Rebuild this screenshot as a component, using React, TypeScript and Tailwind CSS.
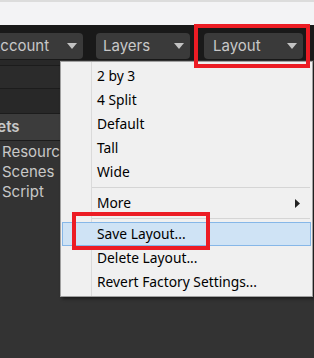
import React from "react";

interface IMenuItem {
  label: string;
  submenu?: boolean;
  active?: boolean;
  separatorBefore?: boolean;
}

const menuItems: Array<IMenuItem> = [
  { label: "2 by 3" },
  { label: "4 Split" },
  { label: "Default" },
  { label: "Tall" },
  { label: "Wide" },
  { label: "More", submenu: true, separatorBefore: true },
  { label: "Save Layout...", active: true, separatorBefore: true },
  { label: "Delete Layout..." },
  { label: "Revert Factory Settings..." },
];

function Caret() {
  return (
    <svg width="10" height="6" viewBox="0 0 10 6" className="shrink-0">
      <path d="M0 0 L10 0 L5 6 Z" fill="#c2c2c2" />
    </svg>
  );
}

function ToolButton(props: { label: string; className: string }) {
  return (
    <div
      className={`h-[26px] rounded-[4px] bg-[#3a3a3a] flex items-center justify-between text-[15px] text-[#c8c8c8] ${props.className}`}
    >
      <span>{props.label}</span>
      <Caret />
    </div>
  );
}

function App() {
  return (
    <div
      className="relative w-[314px] h-[358px] overflow-hidden bg-[#333333]"
      style={{ fontFamily: "Inter, 'Noto Sans', sans-serif" }}
    >
      {/* top window strip */}
      <div className="h-[25px] bg-[#f3f3f5] border-t-2 border-[#dcdcdc]" />

      {/* toolbar */}
      <div className="h-[35px] bg-[#191919] flex items-end pb-[1px]">
        <ToolButton label="Account" className="w-[93px] -ml-[10px] pl-0 pr-[6px]" />
        <ToolButton label="Layers" className="w-[94px] ml-[13px] pl-[7px] pr-[6px]" />
        <ToolButton label="Layout" className="w-[99px] ml-[14px] pl-[9px] pr-[6px]" />
      </div>

      {/* left panel */}
      <div className="w-[60px]">
        <div className="h-[5px] bg-[#282828]" />
        <div className="h-[23px] bg-[#2b2b2b] border-t border-[#1c1c1c]" />
        <div className="h-[25px] bg-[#282828] border-t border-[#1c1c1c]" />
        <div className="h-[27px] bg-[#3c3c3c] border-t border-[#1c1c1c] flex items-center text-[15px] font-semibold text-[#c8c8c8] overflow-hidden">
          <span className="-ml-[30px]">Assets</span>
        </div>
        <div className="border-t border-[#1c1c1c] bg-[#333333] pt-[1px] text-[15px] text-[#c8c8c8] leading-[20px] whitespace-nowrap overflow-hidden">
          <div className="pl-[2px]">Resources</div>
          <div className="pl-[2px]">Scenes</div>
          <div className="pl-[2px]">Script</div>
        </div>
      </div>

      {/* dropdown menu */}
      <div
        className="absolute left-[60px] top-[61px] w-[253px] bg-[#f0f0f0] border border-[#a0a0a0] shadow-[2px_2px_3px_rgba(0,0,0,0.45)] py-[2px]"
        style={{ fontFamily: "'Noto Sans', 'Open Sans', sans-serif" }}
      >
        <div className="absolute left-[30px] top-0 bottom-0 w-px bg-[#dadada]" />
        {menuItems.map((item) => (
          <div key={item.label}>
            {item.separatorBefore ? (
              <div className="ml-[31px] mr-[2px] my-[3px] h-px bg-[#d5d5d5]" />
            ) : (
              ""
            )}
            <div
              className={`relative mx-[1px] h-[24px] flex items-center pl-[34px] pr-[10px] text-[13.8px] text-black border ${
                item.active
                  ? "bg-[#cfe3f5] border-[#86b7e8]"
                  : "border-transparent"
              }`}
            >
              <span className="flex-1">{item.label}</span>
              {item.submenu ? (
                <svg width="5" height="9" viewBox="0 0 5 9">
                  <path d="M0 0 L5 4.5 L0 9 Z" fill="#222" />
                </svg>
              ) : (
                ""
              )}
            </div>
          </div>
        ))}
      </div>

      {/* red annotation boxes */}
      <div className="absolute left-[194px] top-[24px] w-[116px] h-[44px] border-4 border-[#ec1c24]" />
      <div className="absolute left-[72px] top-[212px] w-[138px] h-[38px] border-4 border-[#ec1c24]" />
    </div>
  );
}

export default App;
